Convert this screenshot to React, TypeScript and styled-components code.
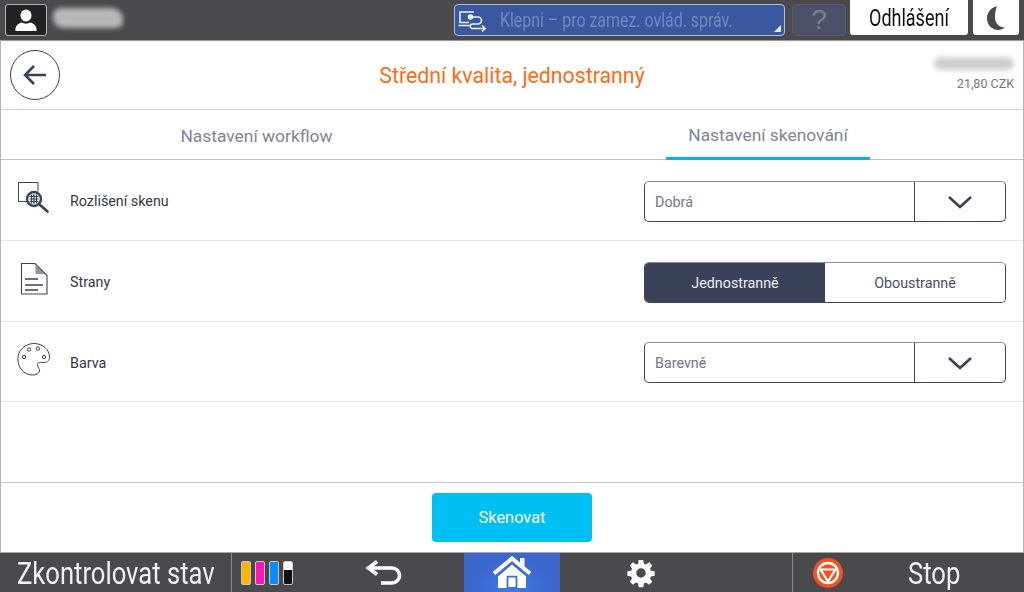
import React from "react";
import styled, { createGlobalStyle } from "styled-components";

const Global = createGlobalStyle`
  html, body { margin: 0; padding: 0; background: #fff; }
  body { font-family: Roboto, "Liberation Sans", sans-serif; }
  #root { width: 1024px; height: 592px; overflow: hidden; }
`;

const Page = styled.div`
  width: 1024px; height: 592px; display: flex; flex-direction: column; overflow: hidden;
`;
const TopBar = styled.header`
  height: 40px; flex: none; background: #4a494e; display: flex; align-items: flex-start;
  padding: 4px 5px 0 5px; box-sizing: border-box;
`;
const UserBadge = styled.div`
  width: 42px; height: 32px; box-sizing: border-box; background: #222224; border: 1px solid #b4b4b6;
  border-radius: 3px; display: flex; align-items: center; justify-content: center;
`;
const BlurName = styled.div`
  width: 70px; height: 20px; margin: 4px 0 0 6px; background: #b8b8b8; border-radius: 8px 12px 7px 10px; filter: blur(2.5px);
`;
const Spacer = styled.div`flex: 1;`;
const Narrow = styled.span<{ $x: number }>`
  display: inline-block; flex: none; font-family: Roboto, "Liberation Sans", sans-serif; white-space: nowrap;
  transform: scaleX(${p => p.$x}); transform-origin: left center;
`;
const LockButton = styled.div`
  position: relative; width: 331px; height: 32px; box-sizing: border-box; background: #3a579f;
  border: 1px solid #b4bcd0; border-radius: 4px; display: flex; align-items: center; padding-left: 3px; overflow: hidden;
`;
const LockIcon = styled.svg`flex: none;`;
const LockText = styled(Narrow)`
  margin-left: 12px; font-size: 20px; color: #7489c2;
`;
const Corner = styled.div`
  position: absolute; right: 3px; bottom: 3px; width: 0; height: 0;
  border-left: 7px solid transparent; border-bottom: 7px solid #e8ecf5;
`;
const HelpButton = styled.div`
  width: 54px; height: 32px; margin-left: 7px; box-sizing: border-box; background: #4a5168; border: 1px solid #585d6c;
  border-radius: 4px; display: flex; align-items: center; justify-content: center; color: #7b7f8b;
  font: 400 28px "Liberation Sans", sans-serif;
`;
const LogoutButton = styled.div`
  width: 118px; height: 35px; margin: -4px 0 0 4px; background: #fff; border-radius: 0 0 3px 3px; display: flex;
  align-items: center; padding-left: 19px; box-sizing: border-box; color: #111;
`;
const LogoutText = styled(Narrow)`font-size: 24px; color: #111;`;
const MoonButton = styled.div`
  width: 46px; height: 35px; margin: -4px 0 0 5px; background: #fff; border-radius: 0 0 3px 3px; display: flex;
  align-items: center; justify-content: center;
`;
const Main = styled.main`
  flex: 1; display: flex; flex-direction: column; border-left: 1px solid #b4b4b4; border-right: 1px solid #b4b4b4;
  border-top: 1px solid #9a9a9a; min-height: 0; background: #fff;
`;
const Header = styled.div`
  height: 69px; flex: none; box-sizing: border-box; position: relative; display: flex; align-items: center;
  justify-content: center; border-bottom: 1px solid #d2d2d2; background: linear-gradient(#f4f4f4, #fff 4px);
`;
const BackButton = styled.div`
  position: absolute; left: 9px; top: 9px; width: 50px; height: 50px; box-sizing: border-box; border: 1px solid #3a4257;
  border-radius: 50%; display: flex; align-items: center; justify-content: center;
`;
const Title = styled.h1`
  margin: 0; font-size: 21.3px; font-weight: 400; color: #ff6a13;
`;
const Account = styled.div`
  position: absolute; right: 9px; top: 16px; display: flex; flex-direction: column; align-items: flex-end;
`;
const BlurAccount = styled.div`
  width: 80px; height: 13px; background: #cfcfcf; border-radius: 7px; filter: blur(2.5px); margin-bottom: 6px;
`;
const Price = styled.div`font-size: 12.5px; color: #73778a; line-height: 15px;`;
const Tabs = styled.nav`
  height: 50px; flex: none; display: flex; box-sizing: border-box; border-bottom: 1px solid #c4c4c4;
`;
const Tab = styled.div<{ $active?: boolean; $w: number }>`
  width: ${p => p.$w}px; box-sizing: border-box; margin-left: ${p => (p.$active ? 154 : 0)}px;
  height: ${p => (p.$active ? 50 : 49)}px; display: flex; align-items: center; justify-content: center; padding-top: 3px;
  font-size: 17.4px; color: #80859a;
  border-bottom: ${p => (p.$active ? "3px solid #00b4ea" : "0")};
`;
const Row = styled.section<{ $last?: boolean }>`
  height: ${p => (p.$last ? 80 : 81)}px; flex: none; box-sizing: border-box; display: flex; align-items: center;
  padding: ${p => (p.$last ? 2 : 3)}px 17px 0 15px;
  border-bottom: 1px solid #e6e6e6;
`;
const IconBox = styled.div`
  width: 34px; height: 34px; flex: none; margin: 0 20px 7px 0; display: flex;
`;
const RowLabel = styled.div<{ $last?: boolean }>`
  flex: 1; font-size: 14.3px; color: #33384a; margin-bottom: ${p => (p.$last ? 0 : 1)}px;
`;
const Select = styled.div`
  width: 362px; height: 41px; box-sizing: border-box; border: 1px solid #3d4459; border-top-color: #8a8fa0;
  border-radius: 5px; display: flex;
`;
const SelectValue = styled.div`
  flex: 1; display: flex; align-items: center; padding-left: 10px; font-size: 14.3px; color: #73778a; padding-top: 1px;
`;
const SelectArrow = styled.div`
  width: 91px; box-sizing: border-box; border-left: 1px solid #3d4459; display: flex; align-items: center; justify-content: center;
`;
const Segment = styled.div`
  width: 362px; height: 41px; box-sizing: border-box; border: 1px solid #3d4459; border-top-color: #8a8fa0;
  border-radius: 5px; display: flex; overflow: hidden;
`;
const SegmentItem = styled.div<{ $on?: boolean }>`
  flex: 1; display: flex; align-items: center; justify-content: center; font-size: 14.3px;
  background: ${p => (p.$on ? "#3a4259" : "#fff")}; color: ${p => (p.$on ? "#eef0f4" : "#4a4f62")};
`;
const Gap = styled.div`flex: 1;`;
const Footer = styled.div`
  height: 70px; flex: none; box-sizing: border-box; border-top: 1px solid #c8c8c8; display: flex; align-items: center;
  justify-content: center;
`;
const ScanButton = styled.button`
  width: 160px; height: 49px; border: 0; border-radius: 4px; background: #00bff3; color: #fff;
  font: 400 16.4px Roboto, sans-serif; padding: 0;
`;
const BottomBar = styled.footer`
  height: 39px; flex: none; background: #4a494e; border-top: 1px solid #a8a8a8; display: flex; align-items: center;
`;
const StatusCell = styled.div`
  width: 231px; height: 100%; flex: none; box-sizing: border-box; display: flex; align-items: center; padding-left: 17px;
`;
const BigText = styled(Narrow)`font-size: 32px; color: #f2f2f2;`;
const InkCell = styled.div`
  width: 103px; height: 100%; flex: none; box-sizing: border-box; border-left: 1px solid #8a8a8c; display: flex; align-items: center;
  gap: 4px; padding: 0 0 0 9px;
`;
const Ink = styled.div<{ $c: string; $dark?: boolean }>`
  width: 10px; height: 24px; box-sizing: border-box; border: 1px solid #c8c8c8; border-radius: 2px;
  background: ${p => (p.$dark ? "linear-gradient(#fff 35%, #111 35%)" : p.$c)};
`;
const NavCell = styled.div<{ $w: number; $on?: boolean; $shift?: number }>`
  width: ${p => p.$w}px; height: 100%; flex: none; box-sizing: border-box; display: flex; align-items: center; justify-content: center;
  padding-right: ${p => p.$shift ?? 0}px;
  background: ${p => (p.$on ? "radial-gradient(ellipse at 50% 100%, #3f78ea 0, #3c68cc 60%)" : "transparent")};
`;
const StopWrap = styled.div`
  flex: 1; height: 100%; box-sizing: border-box; border-left: 1px solid #8a8a8c; display: flex; align-items: center; padding-left: 20px;
`;
const StopText = styled(Narrow)`font-size: 32px; color: #f2f2f2; margin-left: 65px;`;

const ink = "#3a4259";
const Row1Icon = () => (
  <svg width="34" height="34" viewBox="0 0 34 34" fill="none" stroke={ink}>
    <path d="M12 20.500H2.500V1.500h19.500v9" strokeWidth="1" />
    <circle cx="18" cy="18" r="7" fill="#fff" strokeWidth="2.400" />
    <path d="M13.500 15.500h9M13.500 18h9M13.500 20.500h9M15.500 13.500v9M18 13v10M20.500 13.500v9" strokeWidth="1.200" />
    <path d="M23.500 23.500l8 7" strokeWidth="2.600" strokeLinecap="round" />
  </svg>
);
const Row2Icon = () => (
  <svg width="34" height="34" viewBox="0 0 34 34" fill="none" stroke={ink}>
    <path d="M5.500 1.500h13.500l12 12v18.500h-25.500z" strokeWidth="1.100" />
    <path d="M19.500 3v9h9z" fill="#8d91a0" strokeWidth="0" />
    <path d="M9 17h13M9 23h18M9 28h13" strokeWidth="1.600" />
  </svg>
);
const Row3Icon = () => (
  <svg width="34" height="34" viewBox="0 0 34 34" fill="none" stroke={ink} strokeWidth="1">
    <path d="M18 1.500c8.500 0 15.500 6 15.500 13.500 0 4-3 6-6.500 5.500-3.500-.4-6 0-5.500 3 .4 2.500 2.500 3.500 2 5.500-.5 2.500-3.500 4-7.500 4C8 33 1.800 25.500 1.800 17 1.800 8.500 9 1.500 18 1.500z" />
    <circle cx="13" cy="7.500" r="1.700" />
    <circle cx="22" cy="6.500" r="1.700" />
    <circle cx="8" cy="15" r="1.700" />
    <circle cx="28" cy="15" r="1.700" />
  </svg>
);
const Chevron = () => (
  <svg width="26" height="14" viewBox="0 0 26 14" fill="none">
    <path d="M2 2l11 10L24 2" stroke="#3a4259" strokeWidth="2.600" />
  </svg>
);

export default function App() {
  return (
    <Page>
      <Global />
      <TopBar>
        <UserBadge>
          <svg width="24" height="24" viewBox="0 0 24 24" fill="#fff">
            <ellipse cx="12" cy="7.500" rx="5.500" ry="6" />
            <path d="M1.500 23c-.500-5 2-7 6-8.500 3 1.500 6 1.500 9 0 4 1.500 6.500 3.500 6 8.500z" />
          </svg>
        </UserBadge>
        <BlurName />
        <Spacer />
        <LockButton>
          <LockIcon width="30" height="28" viewBox="0 0 30 28" fill="none" stroke="#eef1f8" strokeWidth="1.600">
            <path d="M11 16.500H2V6h14" />
            <path d="M0.500 19.500h11" />
            <circle cx="12.500" cy="11" r="2" fill="#eef1f8" />
            <path d="M13 11h7a3.500 3.500 0 0 1 0 7h-6a2.300 2.300 0 0 0 0 4.500h13M24 19.500l3.200 3-3.200 3" />
          </LockIcon>
          <LockText $x={0.796}>Klepni – pro zamez. ovlád. správ.</LockText>
          <Corner />
        </LockButton>
        <HelpButton>?</HelpButton>
        <LogoutButton><LogoutText $x={0.75}>Odhlášení</LogoutText></LogoutButton>
        <MoonButton>
          <svg width="22" height="26" viewBox="0 0 22 26" fill="#4a494e">
            <path d="M12 1C5 3 2 8 2 13.500 2 20 7 25 13 25c3 0 5-1 7-2.500-5.500 0-10-4-10-10 0-4.500.5-8 2-11.500z" />
          </svg>
        </MoonButton>
      </TopBar>
      <Main>
        <Header>
          <BackButton>
            <svg width="26" height="24" viewBox="0 0 26 24" fill="none" stroke="#3a4259" strokeWidth="2.600">
              <path d="M24 12H3M12 3l-9 9 9 9" />
            </svg>
          </BackButton>
          <Title>Střední kvalita, jednostranný</Title>
          <Account>
            <BlurAccount />
            <Price>21,80 CZK</Price>
          </Account>
        </Header>
        <Tabs>
          <Tab $w={511}>Nastavení workflow</Tab>
          <Tab $active $w={204}>Nastavení skenování</Tab>
        </Tabs>
        <Row>
          <IconBox><Row1Icon /></IconBox>
          <RowLabel>Rozlišení skenu</RowLabel>
          <Select>
            <SelectValue>Dobrá</SelectValue>
            <SelectArrow><Chevron /></SelectArrow>
          </Select>
        </Row>
        <Row>
          <IconBox><Row2Icon /></IconBox>
          <RowLabel>Strany</RowLabel>
          <Segment>
            <SegmentItem $on>Jednostranně</SegmentItem>
            <SegmentItem>Oboustranně</SegmentItem>
          </Segment>
        </Row>
        <Row $last>
          <IconBox><Row3Icon /></IconBox>
          <RowLabel $last>Barva</RowLabel>
          <Select>
            <SelectValue>Barevně</SelectValue>
            <SelectArrow><Chevron /></SelectArrow>
          </Select>
        </Row>
        <Gap />
        <Footer>
          <ScanButton>Skenovat</ScanButton>
        </Footer>
      </Main>
      <BottomBar>
        <StatusCell><BigText $x={0.80}>Zkontrolovat stav</BigText></StatusCell>
        <InkCell>
          <Ink $c="#ffb400" />
          <Ink $c="#ff14b4" />
          <Ink $c="#0a8cff" />
          <Ink $c="#111" $dark />
        </InkCell>
        <NavCell $w={130} $shift={30}>
          <svg width="38" height="28" viewBox="0 0 38 28" fill="none" stroke="#fff" strokeWidth="3.600">
            <path d="M20 9H4M12 2.500L3.500 9l8.500 6.500" />
            <path d="M18 9h9a7.500 7.500 0 0 1 0 15H16" />
          </svg>
        </NavCell>
        <NavCell $w={96} $on>
          <svg width="40" height="33" viewBox="0 0 40 33">
            <path d="M2 17.500L20 2.500l18 15" fill="none" stroke="#fff" strokeWidth="4" />
            <path d="M28 2h4.500v9H28z" fill="#fff" />
            <path d="M6 20.500L20 8.500l14 12V32H6z" fill="#fff" />
            <path d="M15.500 20.700h9V32h-9z" fill="#fff" stroke="#3f70dc" strokeWidth="1.800" />
          </svg>
        </NavCell>
        <NavCell $w={161}>
          <svg width="30" height="30" viewBox="0 0 24 24" fill="#fff" fillRule="evenodd">
            <path d="M13.800 1.500l.5 3 1.700.7 2.500-1.800 2.500 2.500-1.800 2.500.7 1.700 3 .5v3.600l-3 .5-.7 1.700 1.800 2.500-2.500 2.500-2.500-1.800-1.700.7-.5 3h-3.600l-.5-3-1.700-.7-2.500 1.800-2.500-2.500 1.800-2.500-.7-1.700-3-.5v-3.600l3-.5.7-1.700-1.800-2.500 2.500-2.500 2.500 1.800 1.700-.7.5-3zM12 8.200a3.800 3.800 0 1 0 0 7.600 3.800 3.800 0 0 0 0-7.600z" />
          </svg>
        </NavCell>
        <NavCell $w={71} />
        <StopWrap>
          <svg width="30" height="30" viewBox="0 0 30 30" fill="none">
            <circle cx="15" cy="15" r="15" fill="#f4511e" />
            <circle cx="15" cy="15" r="10" stroke="#fff" strokeWidth="2.400" />
            <path d="M7.500 11.500h15L15 23.500z" stroke="#fff" strokeWidth="2.200" />
          </svg>
          <StopText $x={0.8}>Stop</StopText>
        </StopWrap>
      </BottomBar>
    </Page>
  );
}
